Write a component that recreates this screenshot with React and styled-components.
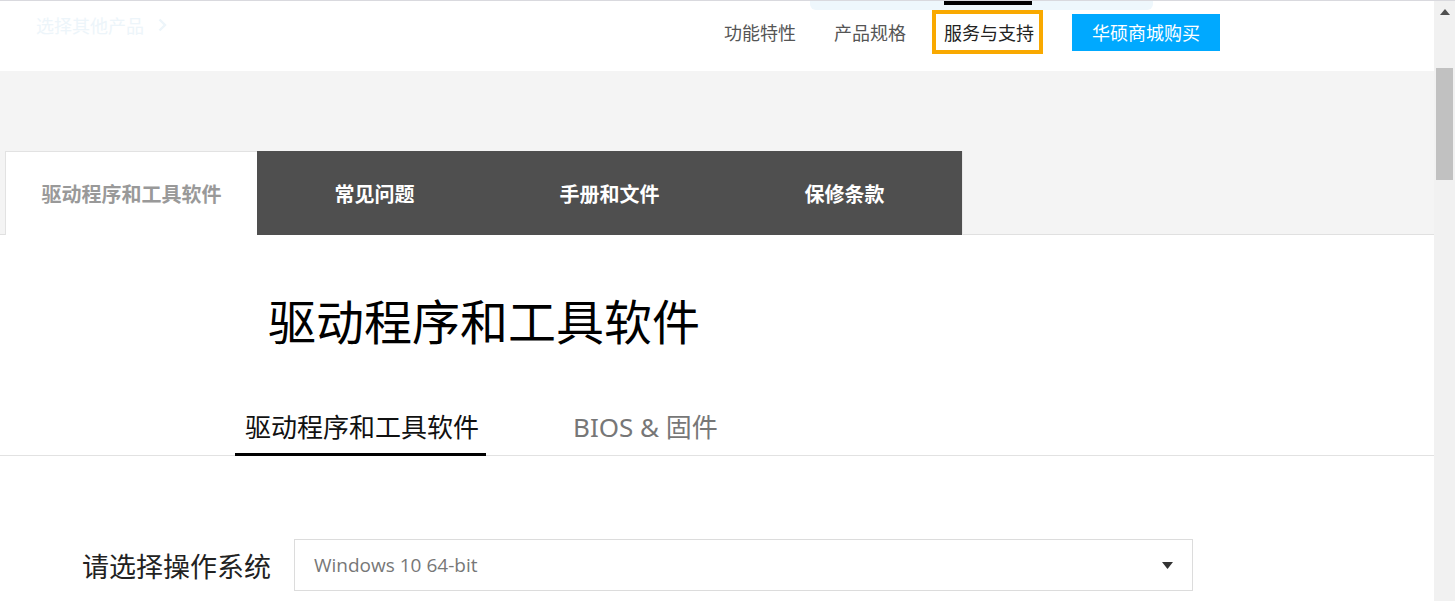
import React from 'react';
import styled, { createGlobalStyle } from 'styled-components';

const GlobalStyle = createGlobalStyle`
  html, body {
    margin: 0;
    padding: 0;
    height: 100%;
    overflow: hidden;
    background: #fff;
  }
  body {
    font-family: "Noto Sans", "Noto Sans CJK SC", sans-serif;
  }
  * {
    box-sizing: border-box;
  }
`;

const Frame = styled.div`
  display: flex;
  height: 601px;
  border-top: 1px solid #d9d9de;
`;

const Page = styled.div`
  flex: 1;
  min-width: 0;
  display: flex;
  flex-direction: column;
  background: #fff;
`;

const Header = styled.header`
  position: relative;
  height: 70px;
  display: flex;
  align-items: center;
  padding: 0 214px 0 36px;
  font-family: "Noto Sans CJK SC", sans-serif;
  font-size: 18px;
`;

const TopStrip = styled.div`
  position: absolute;
  top: 0;
  left: 810px;
  width: 343px;
  height: 9px;
  background: #eef7fc;
  border-radius: 0 0 6px 6px;
`;

const OtherProducts = styled.a`
  display: flex;
  align-items: center;
  gap: 14px;
  margin-right: auto;
  margin-top: -22px;
  color: #edf5fa;
  text-decoration: none;
`;

const Nav = styled.nav`
  display: flex;
  align-items: center;
  gap: 17px;
  margin-bottom: 8px;
`;

const NavItem = styled.a`
  position: relative;
  display: flex;
  align-items: center;
  height: 44px;
  padding: 0 5px 0 8px;
  border: 4px solid ${(p) => (p.$active ? '#f9a900' : 'transparent')};
  color: ${(p) => (p.$active ? '#222' : '#555')};
  text-decoration: none;
  white-space: nowrap;
`;

const ActiveMark = styled.span`
  position: absolute;
  top: -13px;
  left: 8px;
  right: 7px;
  height: 4px;
  background: #000;
`;

const BuyButton = styled.a`
  display: flex;
  align-items: center;
  justify-content: center;
  margin-left: 12px;
  width: 148px;
  height: 37px;
  background: #00a9ff;
  color: #fff;
  text-decoration: none;
`;

const Band = styled.div`
  height: 164px;
  background: #f4f4f4;
  border-bottom: 1px solid #e0e0e0;
  display: flex;
  align-items: flex-end;
  padding-left: 5px;
`;

const TabRow = styled.div`
  display: flex;
  height: 84px;
  margin-bottom: -1px;
  border-right: 1px solid #e8e8e8;
`;

const Tab = styled.div`
  width: ${(p) => (p.$active ? '252px' : '235px')};
  display: flex;
  align-items: center;
  justify-content: center;
  font-family: "Noto Sans CJK SC", sans-serif;
  font-weight: 700;
  font-size: 20px;
  background: ${(p) => (p.$active ? '#fff' : '#4f4f4f')};
  color: ${(p) => (p.$active ? '#999' : '#fff')};
  border-left: ${(p) => (p.$active ? '1px solid #e2e2e2' : 'none')};
  border-top: ${(p) => (p.$active ? '1px solid #e2e2e2' : 'none')};
`;

const Title = styled.h1`
  margin: 55px 0 0 268px;
  font-family: "Noto Sans CJK SC", sans-serif;
  font-weight: 400;
  font-size: 48px;
  line-height: 58px;
  color: #000;
`;

const SubTabBar = styled.div`
  margin-top: 62px;
  display: flex;
  gap: 77px;
  padding-left: 235px;
  border-bottom: 1px solid #e2e2e2;
`;

const SubTab = styled.div`
  padding: 0 7px 9px 10px;
  font-family: "Noto Sans", "Noto Sans CJK SC", sans-serif;
  font-size: 26px;
  line-height: 34px;
  color: ${(p) => (p.$active ? '#111' : '#777')};
  border-bottom: 3px solid ${(p) => (p.$active ? '#000' : 'transparent')};
  margin-bottom: -1px;
`;

const OsRow = styled.div`
  margin-top: 83px;
  display: flex;
  align-items: center;
  gap: 23px;
  padding-left: 82px;
`;

const OsLabel = styled.label`
  font-family: "Noto Sans CJK SC", sans-serif;
  font-size: 27px;
  color: #222;
  white-space: nowrap;
`;

const Select = styled.div`
  width: 899px;
  height: 52px;
  display: flex;
  align-items: center;
  justify-content: space-between;
  padding: 0 19px 0 19px;
  border: 1px solid #dcdcdc;
  font-family: "Open Sans", "Noto Sans", sans-serif;
  font-size: 19px;
  color: #777;
`;

const Scrollbar = styled.div`
  width: 21px;
  background: #f1f1f1;
  display: flex;
  flex-direction: column;
  align-items: center;
`;

const ScrollArrow = styled.div`
  height: 20px;
  display: flex;
  align-items: center;
  justify-content: center;
  margin-top: 1px;
`;

const Thumb = styled.div`
  width: 17px;
  height: 112px;
  margin-top: 46px;
  background: #c1c1c1;
`;

const tabs = ['驱动程序和工具软件', '常见问题', '手册和文件', '保修条款'];
const navs = ['功能特性', '产品规格', '服务与支持'];

export default function App() {
  return (
    <>
      <GlobalStyle />
      <Frame>
        <Page>
          <Header>
            <TopStrip />
            <OtherProducts href="#">
              选择其他产品
              <svg width="9" height="14" viewBox="0 0 9 14">
                <path d="M1.5 1.5 L7 7 L1.5 12.5" fill="none" stroke="#edf5fa" strokeWidth="2.4" />
              </svg>
            </OtherProducts>
            <Nav>
              {navs.map((n, i) => (
                <NavItem key={n} href="#" $active={i === 2}>
                  {i === 2 && <ActiveMark />}
                  {n}
                </NavItem>
              ))}
              <BuyButton href="#">华硕商城购买</BuyButton>
            </Nav>
          </Header>

          <Band>
            <TabRow>
              {tabs.map((t, i) => (
                <Tab key={t} $active={i === 0}>{t}</Tab>
              ))}
            </TabRow>
          </Band>

          <Title>驱动程序和工具软件</Title>

          <SubTabBar>
            <SubTab $active>驱动程序和工具软件</SubTab>
            <SubTab>BIOS &amp; 固件</SubTab>
          </SubTabBar>

          <OsRow>
            <OsLabel>请选择操作系统</OsLabel>
            <Select>
              Windows 10 64-bit
              <svg width="11" height="7" viewBox="0 0 11 7">
                <path d="M0 0 H11 L5.5 7 Z" fill="#333" />
              </svg>
            </Select>
          </OsRow>
        </Page>

        <Scrollbar>
          <ScrollArrow>
            <svg width="10" height="6" viewBox="0 0 10 6">
              <path d="M0 6 L5 0 L10 6 Z" fill="#505050" />
            </svg>
          </ScrollArrow>
          <Thumb />
        </Scrollbar>
      </Frame>
    </>
  );
}
